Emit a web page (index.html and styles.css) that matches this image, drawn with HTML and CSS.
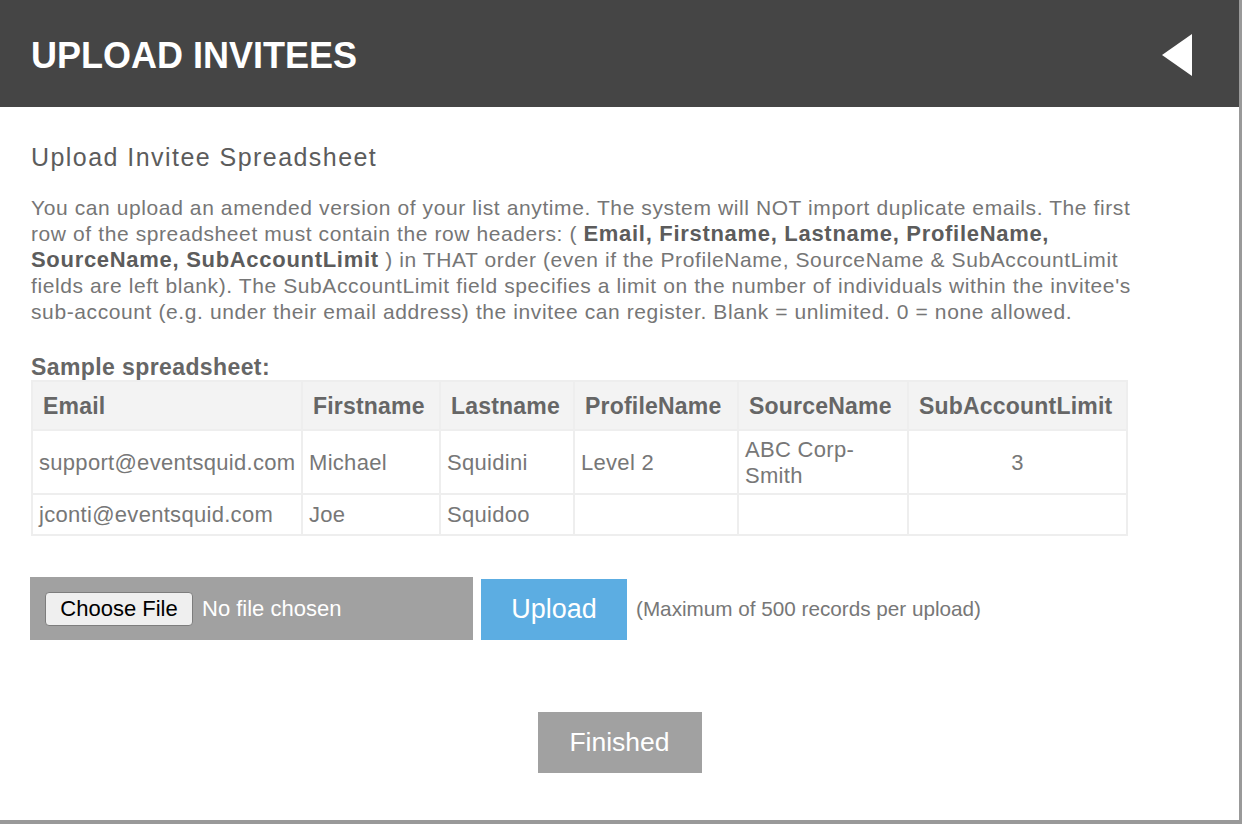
FILE: index.html
```html
<!DOCTYPE html>
<html lang="en">
<head>
  <meta charset="UTF-8" />
  <meta name="viewport" content="width=device-width, initial-scale=1.0"/>
  <title>Upload Invitees</title>
  <link rel="stylesheet" href="styles.css">
</head>
<body>
  <div class="modal">
    <div class="modal-header">
      <h1>UPLOAD INVITEES</h1>
      <a class="back" href="#" title="Back">
        <svg width="30" height="42" viewBox="0 0 30 42"><polygon points="30,0 30,42 0,21" fill="#fff"/></svg>
      </a>
    </div>

    <div class="modal-body">
      <h2>Upload Invitee Spreadsheet</h2>
      <p class="intro">
        You can upload an amended version of your list anytime. The system will NOT import duplicate emails. The first<br>
        row of the spreadsheet must contain the row headers: ( <b>Email, Firstname, Lastname, ProfileName,<br>
        SourceName, SubAccountLimit</b> ) in THAT order (even if the ProfileName, SourceName &amp; SubAccountLimit<br>
        fields are left blank). The SubAccountLimit field specifies a limit on the number of individuals within the invitee's<br>
        sub-account (e.g. under their email address) the invitee can register. Blank = unlimited. 0 = none allowed.
      </p>

      <table class="sample">
        <caption>Sample spreadsheet:</caption>
        <colgroup>
          <col style="width:270px"><col style="width:138px"><col style="width:134px">
          <col style="width:164px"><col style="width:170px"><col style="width:219px">
        </colgroup>
        <thead>
          <tr>
            <th>Email</th><th>Firstname</th><th>Lastname</th>
            <th>ProfileName</th><th>SourceName</th><th>SubAccountLimit</th>
          </tr>
        </thead>
        <tbody>
          <tr>
            <td>support@eventsquid.com</td><td>Michael</td><td>Squidini</td>
            <td>Level 2</td><td>ABC Corp-<br>Smith</td><td class="num">3</td>
          </tr>
          <tr>
            <td>jconti@eventsquid.com</td><td>Joe</td><td>Squidoo</td>
            <td></td><td></td><td></td>
          </tr>
        </tbody>
      </table>

      <form class="upload-row" onsubmit="return false">
        <label class="file-box">
          <input type="file" id="invitee-file" accept=".csv,.xls,.xlsx">
          <span class="file-btn">Choose File</span>
          <span class="file-name" id="file-name">No file chosen</span>
        </label>
        <button class="btn-upload" type="submit">Upload</button>
        <span class="hint">(Maximum of 500 records per upload)</span>
      </form>

      <div class="actions">
        <button class="btn-finished" type="button">Finished</button>
      </div>
    </div>
  </div>

  <script>
    const fileInput = document.getElementById('invitee-file');
    const fileName = document.getElementById('file-name');
    fileInput.addEventListener('change', () => {
      fileName.textContent = fileInput.files.length ? fileInput.files[0].name : 'No file chosen';
    });
  </script>
</body>
</html>
```

FILE: styles.css
```css
body {
  margin: 0;
  background: #999;
  font-family: "Liberation Sans", Arial, Helvetica, sans-serif;
  height: 824px;
  overflow: hidden;
}
.modal {
  width: 1239px;
  height: 820px;
  background: #fff;
  display: flex;
  flex-direction: column;
}
.modal-header {
  background: #454545;
  height: 107px;
  padding: 0 47px 0 31px;
  display: flex;
  align-items: center;
  justify-content: space-between;
  flex-shrink: 0;
}
.modal-header h1 {
  margin: 0;
  color: #fff;
  font-size: 36px;
  font-weight: bold;
  padding-top: 4px;
}
.back {
  display: flex;
  margin-top: 2px;
}
.modal-body {
  padding: 36px 31px 0;
}
h2 {
  margin: 0;
  font-size: 25px;
  font-weight: normal;
  line-height: 29px;
  letter-spacing: 1.45px;
  color: #5c5c5c;
}
.intro {
  margin: 23px 0 0;
  width: 1180px;
  font-size: 21px;
  line-height: 26px;
  letter-spacing: 0.6px;
  color: #767676;
}
.intro b {
  color: #5c5c5c;
  font-size: 22px;
  letter-spacing: 0.7px;
}
.sample {
  margin-top: 30px;
  border-collapse: collapse;
  table-layout: fixed;
  width: 1095px;
  line-height: 26px;
}
.sample caption {
  text-align: left;
  font-size: 23px;
  font-weight: bold;
  letter-spacing: 0.4px;
  color: #666;
  line-height: 24px;
  padding-bottom: 1px;
}
.sample th,
.sample td {
  border: 2px solid #eee;
  text-align: left;
}
.sample th {
  background: #f3f3f3;
  color: #666;
  font-size: 23px;
  letter-spacing: 0.2px;
  padding: 10.5px 10px;
}
.sample td {
  color: #777;
  font-size: 22px;
  letter-spacing: 0.3px;
  padding: 6px 6px 4px;
}
.sample tbody tr:last-child td {
  padding: 7px 6px 6px;
}
.sample td.num {
  text-align: center;
}
.upload-row {
  margin-top: 41px;
  display: flex;
  align-items: flex-end;
  gap: 8px;
  margin-left: -1px;
}
.file-box {
  width: 443px;
  height: 63px;
  background: #a1a1a1;
  display: flex;
  align-items: center;
  padding-left: 15px;
  box-sizing: border-box;
  cursor: pointer;
}
.file-box input {
  display: none;
}
.file-btn {
  width: 148px;
  height: 34px;
  box-sizing: border-box;
  background: #efefef;
  border: 1px solid #7d7d7d;
  border-radius: 4px;
  color: #000;
  font-size: 22px;
  display: flex;
  align-items: center;
  justify-content: center;
}
.file-name {
  color: #fff;
  font-size: 22px;
  margin-left: 9px;
}
.btn-upload {
  width: 146px;
  height: 61px;
  border: none;
  background: #5cade2;
  color: #fff;
  font-family: inherit;
  font-size: 27px;
  cursor: pointer;
}
.hint {
  align-self: center;
  font-size: 20.7px;
  color: #777;
  margin-left: 1px;
  padding-top: 1px;
}
.actions {
  margin-top: 72px;
  display: flex;
  justify-content: center;
  margin-left: -62px;
  margin-right: -62px;
}
.btn-finished {
  width: 164px;
  height: 61px;
  border: none;
  background: #a1a1a1;
  color: #fff;
  font-family: inherit;
  font-size: 26.5px;
  cursor: pointer;
}
```
